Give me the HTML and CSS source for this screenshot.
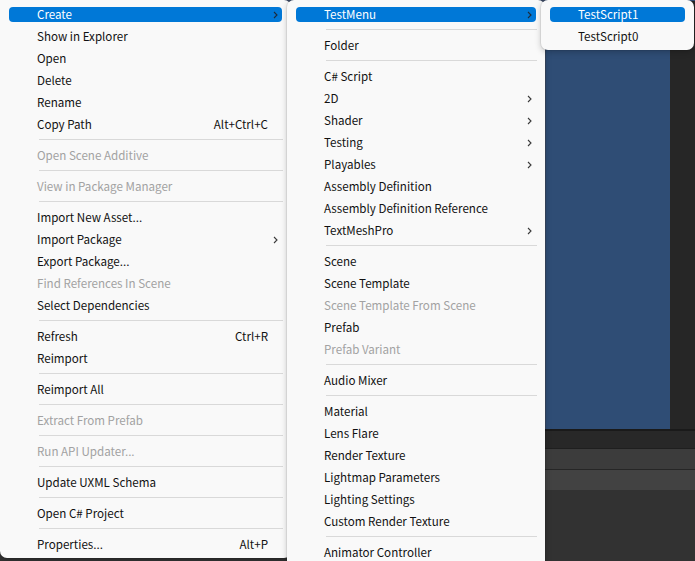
FILE: index.html
```html
<!DOCTYPE html>
<html lang="en">
<head>
    <meta charset="UTF-8">
    <title>Project Context Menu</title>
    <link rel="stylesheet" href="styles.css">
</head>
<body>

    <div class="editor">
        <div class="scene-row">
            <div class="project-pane"></div>
            <div class="scene-view"></div>
            <div class="inspector"></div>
        </div>
        <div class="panel-edge"></div>
        <div class="toolbar"></div>
        <div class="strip strip-a"></div>
        <div class="strip strip-b"></div>
        <div class="console"></div>

        <!-- Assets context menu -->
        <ul class="menu menu-main">
            <li class="item active"><span class="label">Create</span><svg class="arrow" viewBox="0 0 5 8"><path d="M1 1 L4 4 L1 7"/></svg></li>
            <li class="item"><span class="label">Show in Explorer</span></li>
            <li class="item"><span class="label">Open</span></li>
            <li class="item"><span class="label">Delete</span></li>
            <li class="item"><span class="label">Rename</span></li>
            <li class="item"><span class="label">Copy Path</span><span class="shortcut">Alt+Ctrl+C</span></li>
            <li class="sep"></li>
            <li class="item disabled"><span class="label">Open Scene Additive</span></li>
            <li class="sep"></li>
            <li class="item disabled"><span class="label">View in Package Manager</span></li>
            <li class="sep"></li>
            <li class="item"><span class="label">Import New Asset...</span></li>
            <li class="item"><span class="label">Import Package</span><svg class="arrow" viewBox="0 0 5 8"><path d="M1 1 L4 4 L1 7"/></svg></li>
            <li class="item"><span class="label">Export Package...</span></li>
            <li class="item disabled"><span class="label">Find References In Scene</span></li>
            <li class="item"><span class="label">Select Dependencies</span></li>
            <li class="sep"></li>
            <li class="item"><span class="label">Refresh</span><span class="shortcut">Ctrl+R</span></li>
            <li class="item"><span class="label">Reimport</span></li>
            <li class="sep"></li>
            <li class="item"><span class="label">Reimport All</span></li>
            <li class="sep"></li>
            <li class="item disabled"><span class="label">Extract From Prefab</span></li>
            <li class="sep"></li>
            <li class="item disabled"><span class="label">Run API Updater...</span></li>
            <li class="sep"></li>
            <li class="item"><span class="label">Update UXML Schema</span></li>
            <li class="sep"></li>
            <li class="item"><span class="label">Open C# Project</span></li>
            <li class="sep"></li>
            <li class="item"><span class="label">Properties...</span><span class="shortcut">Alt+P</span></li>
        </ul>

        <!-- Create submenu -->
        <ul class="menu menu-create">
            <li class="item active"><span class="label">TestMenu</span><svg class="arrow" viewBox="0 0 5 8"><path d="M1 1 L4 4 L1 7"/></svg></li>
            <li class="sep"></li>
            <li class="item"><span class="label">Folder</span></li>
            <li class="sep"></li>
            <li class="item"><span class="label">C# Script</span></li>
            <li class="item"><span class="label">2D</span><svg class="arrow" viewBox="0 0 5 8"><path d="M1 1 L4 4 L1 7"/></svg></li>
            <li class="item"><span class="label">Shader</span><svg class="arrow" viewBox="0 0 5 8"><path d="M1 1 L4 4 L1 7"/></svg></li>
            <li class="item"><span class="label">Testing</span><svg class="arrow" viewBox="0 0 5 8"><path d="M1 1 L4 4 L1 7"/></svg></li>
            <li class="item"><span class="label">Playables</span><svg class="arrow" viewBox="0 0 5 8"><path d="M1 1 L4 4 L1 7"/></svg></li>
            <li class="item"><span class="label">Assembly Definition</span></li>
            <li class="item"><span class="label">Assembly Definition Reference</span></li>
            <li class="item"><span class="label">TextMeshPro</span><svg class="arrow" viewBox="0 0 5 8"><path d="M1 1 L4 4 L1 7"/></svg></li>
            <li class="sep"></li>
            <li class="item"><span class="label">Scene</span></li>
            <li class="item"><span class="label">Scene Template</span></li>
            <li class="item disabled"><span class="label">Scene Template From Scene</span></li>
            <li class="item"><span class="label">Prefab</span></li>
            <li class="item disabled"><span class="label">Prefab Variant</span></li>
            <li class="sep"></li>
            <li class="item"><span class="label">Audio Mixer</span></li>
            <li class="sep"></li>
            <li class="item"><span class="label">Material</span></li>
            <li class="item"><span class="label">Lens Flare</span></li>
            <li class="item"><span class="label">Render Texture</span></li>
            <li class="item"><span class="label">Lightmap Parameters</span></li>
            <li class="item"><span class="label">Lighting Settings</span></li>
            <li class="item"><span class="label">Custom Render Texture</span></li>
            <li class="sep"></li>
            <li class="item"><span class="label">Animator Controller</span></li>
        </ul>

        <!-- TestMenu submenu -->
        <ul class="menu menu-test">
            <li class="item active"><span class="label">TestScript1</span></li>
            <li class="item"><span class="label">TestScript0</span></li>
        </ul>
    </div>

</body>
</html>
```

FILE: styles.css
```css
* { box-sizing: border-box; }

body {
    margin: 0;
    background: #2b2b2b;
    font-family: "Noto Sans CJK KR", "Noto Sans", sans-serif;
    overflow: hidden;
}

.editor {
    position: relative;
    width: 695px;
    height: 561px;
    display: flex;
    flex-direction: column;
    overflow: hidden;
    background: #323232;
}

/* editor panels behind the menus */
.scene-row { display: flex; height: 429px; }
.project-pane { width: 546px; background: #3b4a66; }
.scene-view { width: 124px; background: #2f4d75; }
.inspector { flex: 1; background: #262626; border-top: 1px solid #2f4d75; }

.panel-edge { height: 2px; background: #1a1a1a; }
.toolbar { height: 18px; background: #282828; border-bottom: 1px solid #1f1f1f; }
.strip { height: 21px; }
.strip-a { background: #3c3c3c; border-bottom: 1px solid #262626; }
.strip-b { height: 20px; background: #424242; }
.console { flex: 1; background: #323232; }

/* menus */
.menu {
    position: absolute;
    top: 0;
    display: flex;
    flex-direction: column;
    margin: 0;
    padding: 3px 0;
    list-style: none;
    background: #f9f9f9;
    border-radius: 7px;
    box-shadow: 0 0 0 1px rgba(0, 0, 0, 0.06), 0 2px 6px rgba(0, 0, 0, 0.22);
    font-size: 11.6px;
    color: #111;
}

.menu-main { left: 0; width: 291px; z-index: 1; border-top-left-radius: 0; }
.menu-create { left: 287px; width: 258px; height: 570px; z-index: 2; }
.menu-test { left: 541px; width: 153px; z-index: 3; }

.item {
    display: flex;
    align-items: center;
    flex-shrink: 0;
    height: 15px;
    margin: 4px 9px 3px;
    padding: 0 4px 0 28px;
    border-radius: 4px;
    white-space: nowrap;
    line-height: 15px;
}

.item .label { flex: 1; }

.item .shortcut { margin-right: 10px; }

.item .arrow {
    width: 5px;
    height: 8px;
    fill: none;
    stroke: #3a3a3a;
    stroke-width: 1.1;
}

.item.disabled { color: #a2a2a2; }

.item.active {
    background: #0078d7;
    color: #fff;
}

.item.active .arrow { stroke: #1d2b3a; }

.sep {
    flex-shrink: 0;
    height: 1px;
    margin: 4px 8px 4px 39px;
    background: #d9d9d9;
}
```
